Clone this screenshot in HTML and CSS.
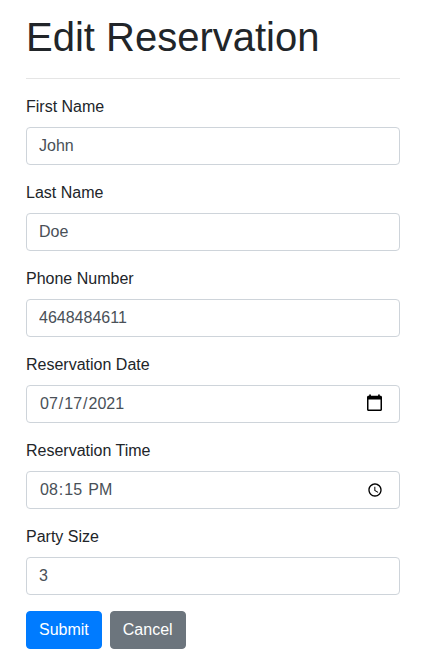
FILE: index.html
```html
<!DOCTYPE html>
<html lang="en">
<head>
<meta charset="utf-8">
<title>Edit Reservation</title>
<link rel="stylesheet" href="styles.css">
</head>
<body>
<main class="page">
<h1>Edit Reservation</h1>
<hr>
<form>
<div class="form-group"><label for="first">First Name</label><input class="form-control" id="first" type="text" value="John"></div>
<div class="form-group"><label for="last">Last Name</label><input class="form-control" id="last" type="text" value="Doe"></div>
<div class="form-group"><label for="phone">Phone Number</label><input class="form-control" id="phone" type="text" value="4648484611"></div>
<div class="form-group"><label for="date">Reservation Date</label>
<div class="date-field"><input class="form-control" id="date" type="date" value="2021-07-17"><svg class="calendar-icon" viewBox="0 0 15 17" aria-hidden="true"><path fill-rule="evenodd" d="M2.200 .4h1.700v1.400h7.200V.4h1.700v1.400h.7c.8 0 1.500.6 1.500 1.400v12.300c0 .8-.7 1.500-1.500 1.500h-12C.7 17 0 16.300 0 15.500V3.200c0-.8.7-1.400 1.500-1.400h.7zM1.500 5.600v9.900h12V5.600z"/></svg></div></div>
<div class="form-group"><label for="time">Reservation Time</label><input class="form-control" id="time" type="time" value="20:15"></div>
<div class="form-group"><label for="size">Party Size</label><input class="form-control" id="size" type="number" value="3"></div>
<div class="actions"><button class="btn btn-primary" type="submit">Submit</button><button class="btn btn-secondary" type="button">Cancel</button></div>
</form>
</main>
</body>
</html>
```
FILE: styles.css
```css
*, *::before, *::after { box-sizing: border-box; }
body {
  margin: 0;
  font: 400 16px/1.5 "Liberation Sans", Arial, sans-serif;
  color: #212529;
  background: #fff;
  overflow: hidden;
}
.page { padding: 13px 26px 0; }
h1 { margin: 0; font-size: 40px; font-weight: 400; line-height: 48px; }
hr { margin: 17px 0 16px; border: 0; border-top: 1px solid rgba(0, 0, 0, .1); }
.form-group { margin-bottom: 16px; }
label { display: block; margin-bottom: 8px; }
.form-control {
  display: block;
  width: 100%;
  height: 38px;
  margin: 0;
  padding: 6px 12px;
  font: inherit;
  color: #495057;
  background: #fff;
  border: 1px solid #ced4da;
  border-radius: 4px;
}
.date-field { position: relative; }
.date-field input::-webkit-calendar-picker-indicator { opacity: 0; }
.calendar-icon {
  position: absolute;
  right: 18px;
  top: 9px;
  width: 15px;
  height: 17px;
  pointer-events: none;
}
input::-webkit-datetime-edit-ampm-field { margin-left: 1px; }
.actions { display: flex; gap: 8px; }
.btn {
  margin: 0;
  padding: 6px 12px;
  font: inherit;
  color: #fff;
  border: 1px solid transparent;
  border-radius: 4px;
}
.btn-primary { background: #007bff; border-color: #007bff; }
.btn-secondary { background: #6c757d; border-color: #6c757d; }
```
